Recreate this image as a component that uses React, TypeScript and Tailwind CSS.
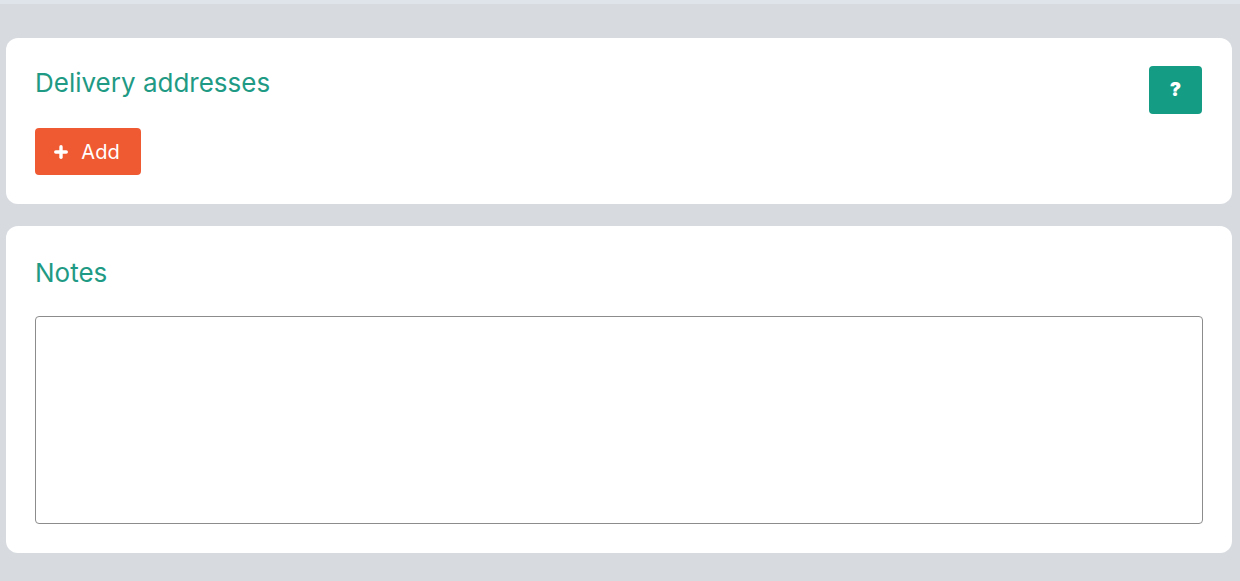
import { Plus } from "lucide-react";

export default function App() {
    return (
        <div className="min-h-[581px] w-[1240px] bg-[#d7dbe0] font-['Inter',sans-serif]">
            <div className="h-[4px] bg-[#dfe3ea]" />
            <div className="pt-[34px] pl-[6px] pr-[8px] flex flex-col gap-[22px]">
                {/* Delivery addresses */}
                <div className="bg-white rounded-[12px] h-[166px] pl-[29px] pr-[30px] pt-[28px] flex justify-between">
                    <div className="flex flex-col">
                        <h2 className="text-[26px] leading-[32px] text-[#1f9a84] font-normal mt-[1px]">Delivery addresses</h2>
                        <button className="mt-[29px] w-[106px] h-[47px] rounded-[4px] bg-[#ef5a33] text-white text-[20px] flex items-center justify-center gap-[11px] pr-[4px]">
                            <Plus className="w-[18px] h-[18px]" strokeWidth={4.5} />
                            Add
                        </button>
                    </div>
                    <button className="w-[53px] h-[48px] rounded-[4px] bg-[#149c84] text-white text-[19px] font-black flex items-center justify-center">
                        ?
                    </button>
                </div>

                {/* Notes */}
                <div className="bg-white rounded-[12px] pl-[29px] pr-[29px] pt-[28px] pb-[29px]">
                    <h2 className="text-[26px] leading-[32px] text-[#1f9a84] font-normal mt-[3px]">Notes</h2>
                    <textarea className="mt-[27px] block w-full h-[208px] border border-[#8c8c8c] rounded-[4px] resize-none outline-none" />
                </div>
            </div>
        </div>
    );
}
